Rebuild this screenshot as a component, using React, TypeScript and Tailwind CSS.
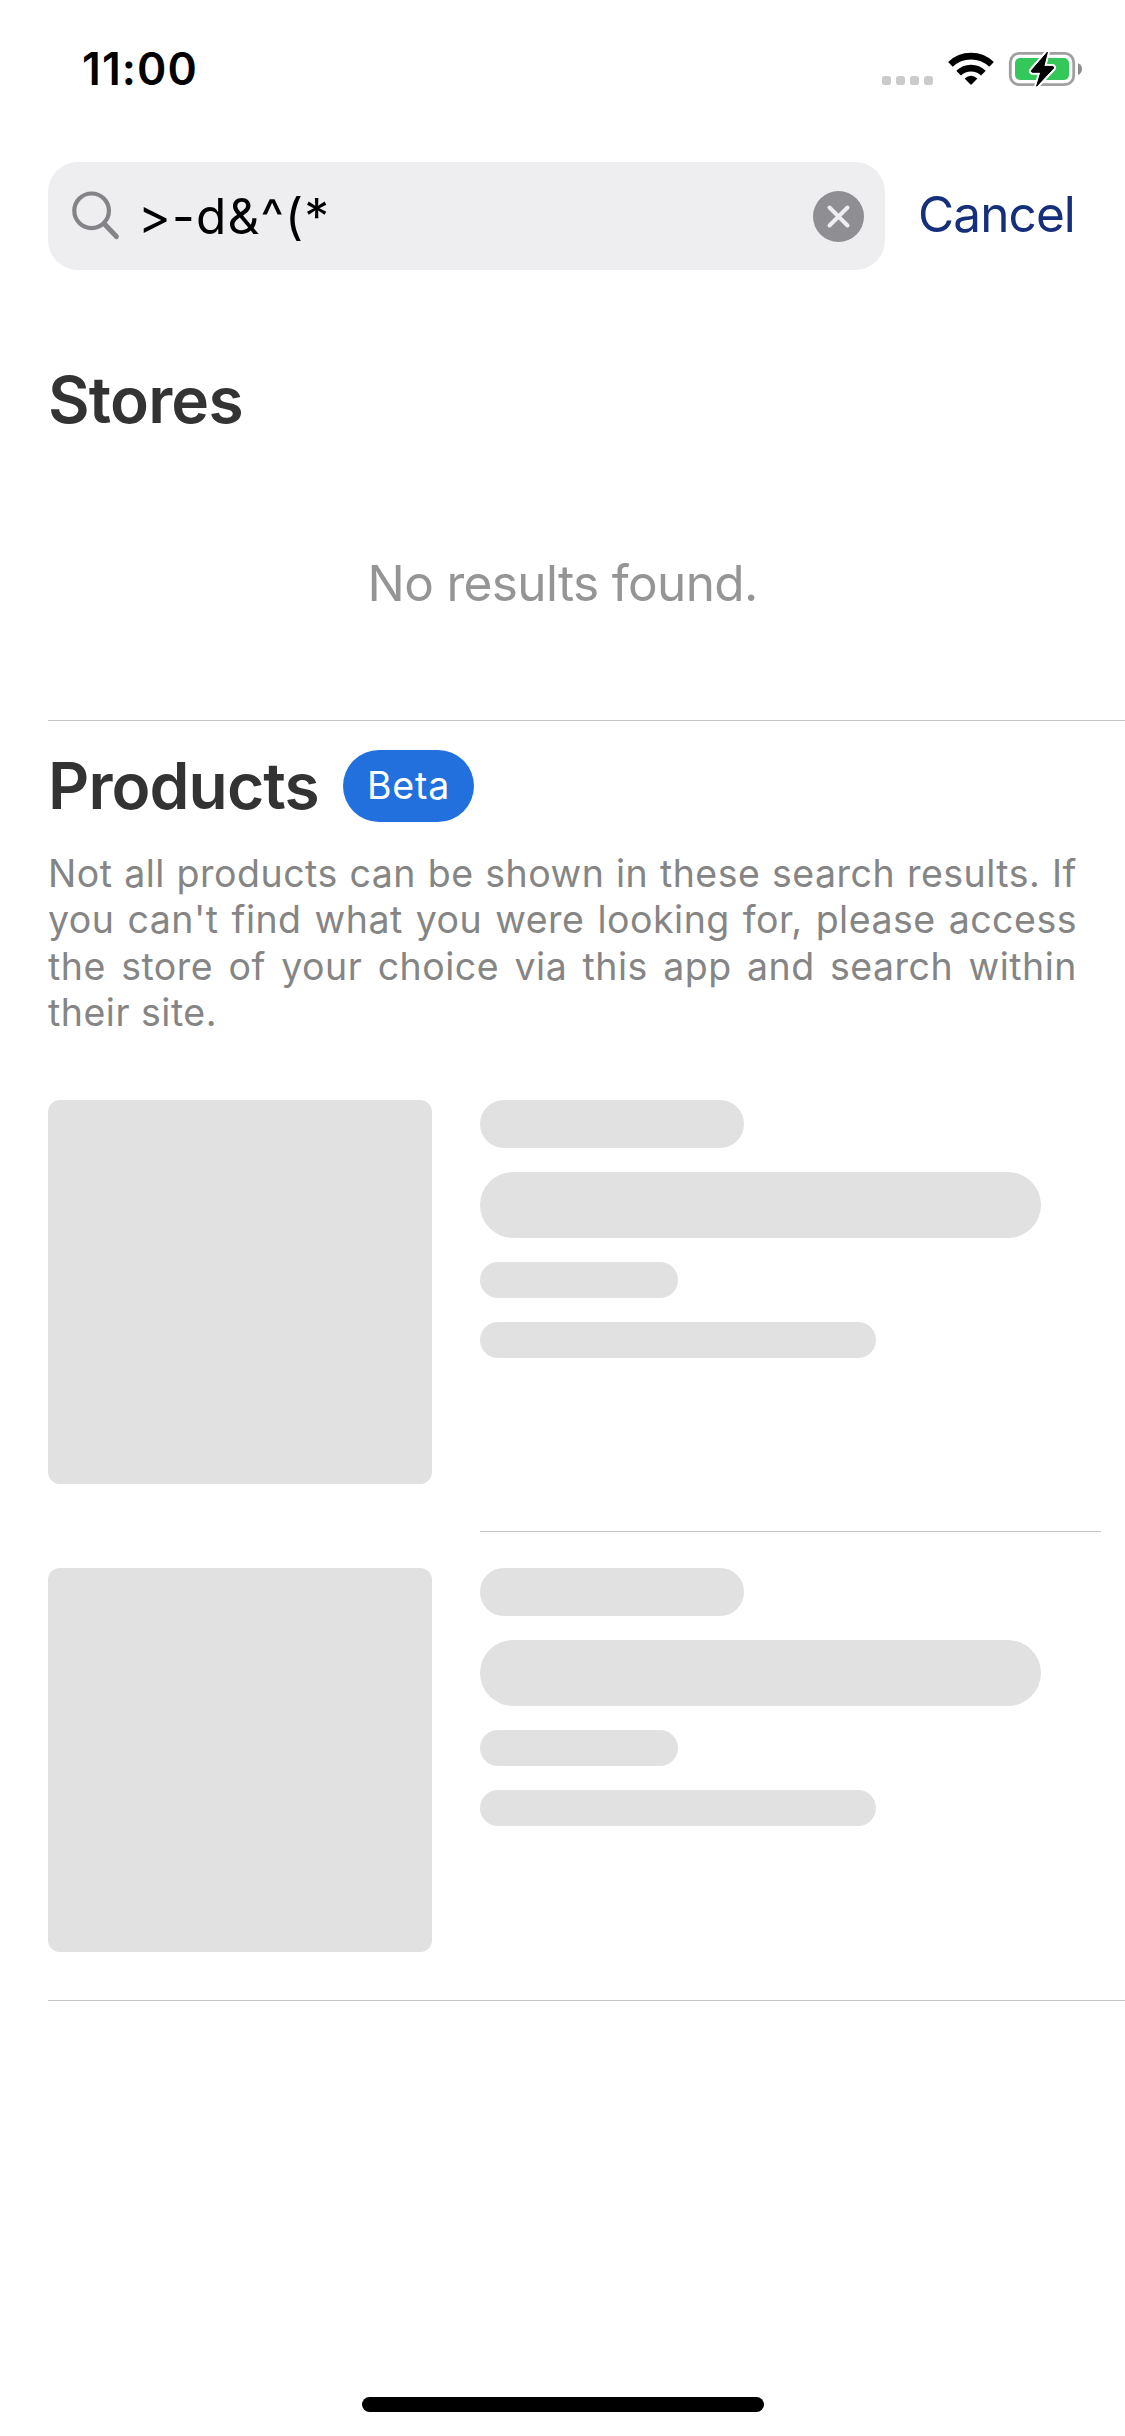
import React from "react";

function StatusIcons() {
  return (
    <svg width="204" height="38" viewBox="880 50 204 38" className="block">
      {[882, 896, 910, 924].map((x) => (
        <rect key={x} x={x} y="76" width="9" height="9" rx="2.8" fill="#cbcbcb" />
      ))}
      <g fill="none" stroke="#000" strokeWidth="6.6">
        <path d="M950.4 64.4A29.8 29.8 0 0 1 991.6 64.4" />
        <path d="M958.6 73.2A17.6 17.6 0 0 1 983.4 73.2" />
      </g>
      <path d="M964.6 78.4Q971 73.2 977.4 78.4L971.8 84.3Q971 85 970.2 84.3Z" fill="#000" />
      <rect x="1010.3" y="53.3" width="63.4" height="31.4" rx="9" fill="none" stroke="#a0a0a0" strokeWidth="2.8" />
      <rect x="1015" y="58" width="54" height="22" rx="5" fill="#34c759" />
      <path d="M1078 63.2Q1082 65 1082 69Q1082 73 1078 75Z" fill="#8c8c8c" />
      <path
        d="M1047.4 52.2L1031.6 70.4Q1030.8 71.8 1032.4 72.2H1040.8L1036.6 86.2L1053.4 68.2Q1054.2 66.8 1052.6 66.4H1043.8Z"
        fill="#000"
        stroke="#fff"
        strokeWidth="5"
        strokeLinejoin="round"
        paintOrder="stroke"
      />
      <path
        d="M1047.4 52.2L1031.6 70.4Q1030.8 71.8 1032.4 72.2H1040.8L1036.6 86.2L1053.4 68.2Q1054.2 66.8 1052.6 66.4H1043.8Z"
        fill="#000"
        stroke="#000"
        strokeWidth="1"
        strokeLinejoin="round"
      />
    </svg>
  );
}

function SkeletonRow() {
  return (
    <div className="flex gap-12">
      <div className="size-96 rounded-xl bg-[#e1e1e1]" />
      <div className="flex flex-col gap-6">
        <div className="h-12 w-[264px] rounded-full bg-[#e1e1e1]" />
        <div className="h-[66px] w-[561px] rounded-full bg-[#e1e1e1]" />
        <div className="h-9 w-[198px] rounded-full bg-[#e1e1e1]" />
        <div className="h-9 w-[396px] rounded-full bg-[#e1e1e1]" />
      </div>
    </div>
  );
}

export default function App() {
  return (
    <div className="flex h-[2436px] w-[1125px] flex-col overflow-hidden bg-white font-['Inter',sans-serif]">
      <header className="flex h-[162px] items-start justify-between pr-[41px] pl-[82px]">
        <span className="mt-[42px] text-[44.5px] leading-[54px] font-semibold tracking-[1.1px] text-black">11:00</span>
        <div className="mt-[50px]">
          <StatusIcons />
        </div>
      </header>

      <div className="flex h-[108px] shrink-0 items-center pl-12">
        <div className="flex h-full w-[837px] items-center rounded-[30px] bg-[#eeeef0] pr-[21px] pl-6">
          <svg width="48" height="50" viewBox="72 191 48 50" fill="none" stroke="#848488" className="block shrink-0">
            <circle cx="91.6" cy="210.8" r="17.3" strokeWidth="4.2" />
            <path d="M104 223.6L116.4 236.6" strokeWidth="5" strokeLinecap="round" />
          </svg>
          <span className="ml-[18px] flex-1 text-[49.5px] leading-[60px] tracking-[1.2px] whitespace-pre text-black">{">-d&^(*"}</span>
          <svg width="51" height="51" viewBox="0 0 51 51" className="block shrink-0">
            <circle cx="25.5" cy="25.5" r="25.5" fill="#8e8e93" />
            <path d="M16.5 16.5L34.5 34.5M34.5 16.5L16.5 34.5" stroke="#eeeef0" strokeWidth="4" strokeLinecap="round" />
          </svg>
        </div>
        <span className="mb-[4px] ml-[33px] text-[49.5px] leading-[60px] tracking-[-0.9px] text-[#162f7b]">Cancel</span>
      </div>

      <section className="flex h-[450px] shrink-0 flex-col pl-12">
        <h2 className="mt-[90px] text-[64px] leading-[80px] font-semibold tracking-[-0.8px] text-[#333]">Stores</h2>
        <p className="mt-[113px] pr-12 text-center text-[49.5px] leading-[60px] tracking-[-0.65px] text-[#959595]">
          No results found.
        </p>
      </section>

      <section className="flex flex-col">
        <div className="ml-12 h-px bg-[#c4c4c6]" />
        <div className="mt-[29px] ml-12 flex h-[72px] items-center">
          <h2 className="w-[295px] text-[64px] leading-[72px] font-semibold tracking-[-0.9px] text-[#333]">Products</h2>
          <span className="flex h-[72px] w-[131px] items-center justify-center rounded-full bg-[#2170dd] text-[37.5px] tracking-[0.8px] text-white">
            Beta
          </span>
        </div>
        <p className="mt-[29px] ml-12 w-[1029px] text-justify text-[37.5px] leading-[46.3px] tracking-[0.5px] text-[#858585]">
          Not all products can be shown in these search results. If you can't find what you were looking for, please
          access the store of your choice via this app and search within their site.
        </p>
        <div className="mt-[64px] ml-12">
          <SkeletonRow />
          <div className="mt-[47px] mr-6 mb-9 ml-[432px] h-px bg-[#c4c4c6]" />
          <SkeletonRow />
          <div className="mt-12 h-px bg-[#c4c4c6]" />
        </div>
      </section>

      <div className="mt-auto mb-6 h-[15px] w-[402px] self-center rounded-full bg-black" />
    </div>
  );
}
